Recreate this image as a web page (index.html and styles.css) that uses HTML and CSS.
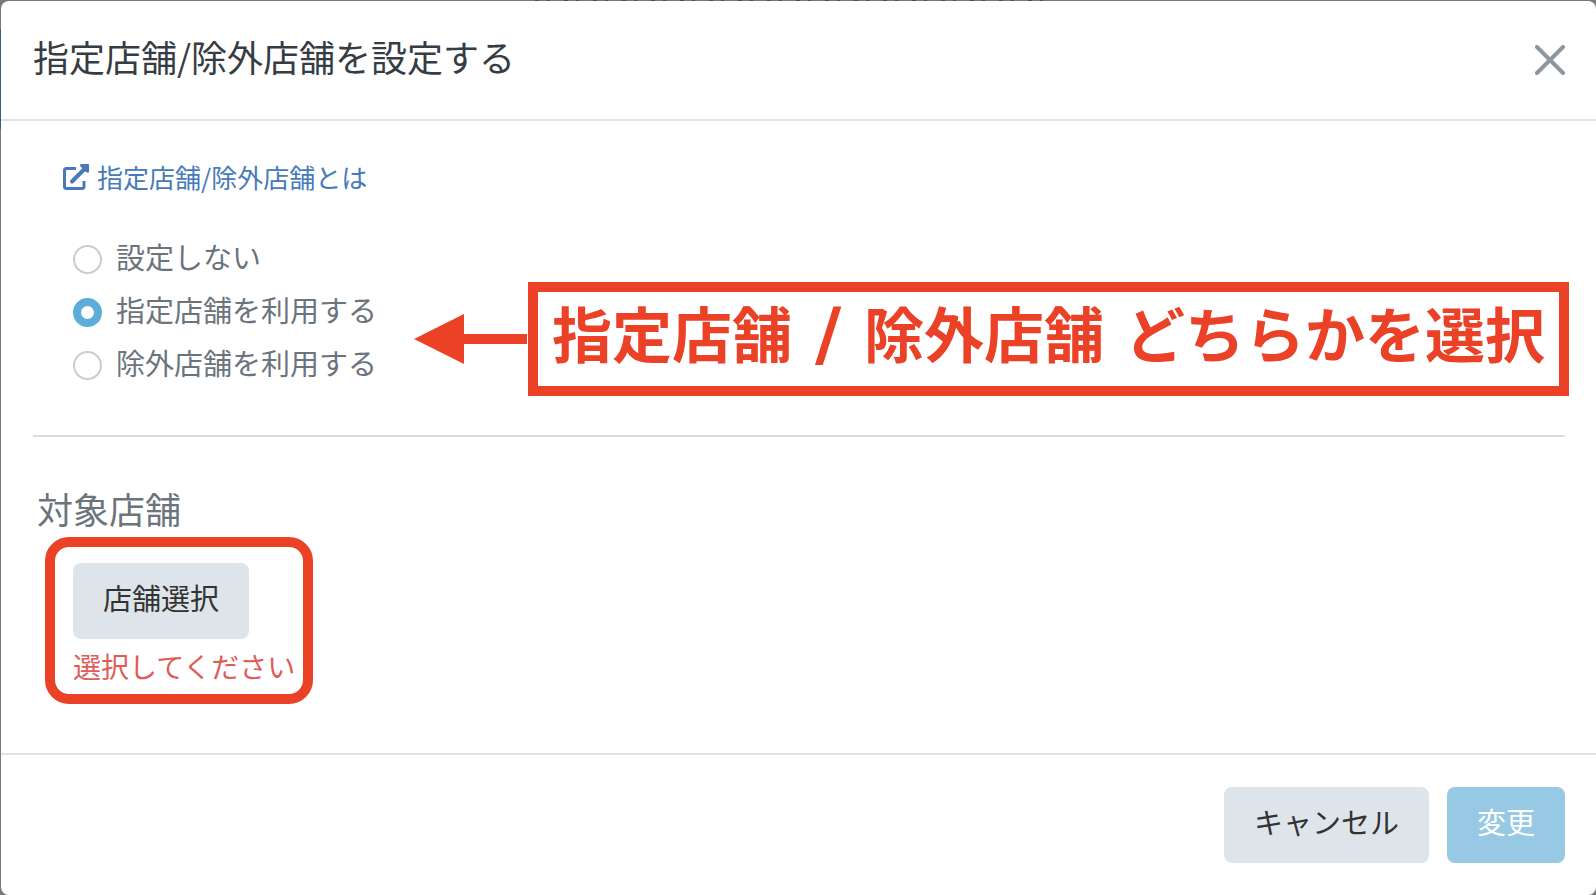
FILE: index.html
```html
<!DOCTYPE html>
<html lang="ja">
<head>
    <meta charset="UTF-8">
    <meta name="viewport" content="width=device-width, initial-scale=1.0">
    <title>指定店舗/除外店舗を設定する</title>
    <link rel="stylesheet" href="styles.css">
</head>
<body>

    <div class="modal" role="dialog" aria-labelledby="modal-title">
        <div class="modal-header">
            <h1 class="modal-title" id="modal-title">指定店舗/除外店舗を設定する</h1>
            <button class="close" type="button" aria-label="閉じる">
                <svg width="30" height="30" viewBox="0 0 30 30"><path d="M2 2L28 28M28 2L2 28"/></svg>
            </button>
        </div>

        <div class="modal-body">
            <a class="help-link" href="#">
                <svg width="26" height="26" viewBox="0 0 26 26">
                    <path class="icon-line" d="M13 4.500H3.500Q1.500 4.500 1.500 6.500V22.500Q1.500 24.500 3.500 24.500H19Q21 24.500 21 22.500V17"/>
                    <path class="icon-line arrow-line" d="M9 17.500L21 5.500"/>
                    <path class="icon-fill" d="M17.500 0H25.200Q26 0 26 .8V8.500L23.500 8.500L17 2Z"/>
                </svg>
                <span>指定店舗/除外店舗とは</span>
            </a>

            <div class="options-row">
                <div class="options">
                    <label class="option"><input type="radio" name="shop"><span>設定しない</span></label>
                    <label class="option"><input type="radio" name="shop" checked><span>指定店舗を利用する</span></label>
                    <label class="option"><input type="radio" name="shop"><span>除外店舗を利用する</span></label>
                </div>
                <div class="note">
                    <svg class="note-arrow" width="114" height="50" viewBox="0 0 114 50"><path d="M0 25L50 0V20H113V30H50V50Z"/></svg>
                    <p class="note-text">指定店舗 <span class="slash">/</span> 除外店舗 どちらかを選択</p>
                </div>
            </div>

            <hr>

            <h2 class="section-title">対象店舗</h2>
            <div class="select-box">
                <button class="btn" type="button">店舗選択</button>
                <p class="error">選択してください</p>
            </div>
        </div>

        <div class="modal-footer">
            <button class="btn" type="button">キャンセル</button>
            <button class="btn btn-primary" type="button">変更</button>
        </div>
    </div>

</body>
</html>
```
FILE: styles.css
```css
* {
    box-sizing: border-box;
}
body {
    margin: 0;
    padding: 1px 0 0 1px;
    min-height: 100vh;
    display: flex;
    font-family: "Noto Sans CJK JP", sans-serif;
    font-size: 29px;
    color: #6b747c;
    background:
        repeating-linear-gradient(90deg, #554b4e 0 4px, #7d7674 4px 12px, #554b4e 12px 15px, #7d7674 15px 29px) 535px 0 / 518px 1px no-repeat,
        linear-gradient(#336384, #336384) 0 29px / 1px 100px no-repeat,
        #7d7878;
}
h1, h2, p {
    margin: 0;
    font-weight: normal;
}
.modal {
    flex: 1;
    display: flex;
    flex-direction: column;
    background: #fff;
    border-radius: 8px;
}
.modal-header {
    display: flex;
    align-items: center;
    justify-content: space-between;
    padding: 32px 31px 32px 32px;
    border-bottom: 2px solid #dde3e8;
}
.modal-title {
    padding-bottom: 8px;
    font-size: 36px;
    line-height: 46px;
    color: #363c43;
}
.close {
    display: flex;
    padding: 0;
    border: none;
    background: none;
    cursor: pointer;
}
.close path {
    fill: none;
    stroke: #8d969f;
    stroke-width: 4;
    stroke-linecap: round;
}
.modal-body {
    flex: 1;
    padding: 38px 31px 48px 32px;
}
.help-link {
    display: flex;
    align-items: center;
    gap: 8px;
    width: fit-content;
    margin-left: 30px;
    font-size: 26px;
    line-height: 36px;
    color: #477ab9;
    text-decoration: none;
}
.icon-line {
    fill: none;
    stroke: #477ab9;
    stroke-width: 3;
}
.arrow-line {
    stroke-width: 4;
    stroke-linecap: round;
}
.icon-fill {
    fill: #477ab9;
}
.options-row {
    display: flex;
    justify-content: space-between;
    margin: 38px -4px 0 40px;
}
.option {
    display: flex;
    align-items: center;
    gap: 14px;
    line-height: 46px;
    padding-bottom: 7px;
}
.option input {
    appearance: none;
    width: 29px;
    height: 29px;
    margin: 7px 0 0;
    border: 2px solid #ccc;
    border-radius: 50%;
    background: #fff;
}
.option input:checked {
    border: 8px solid #5eadd8;
}
.note {
    display: flex;
    align-items: center;
    margin-top: 49px;
    color: #ea4127;
}
.note-arrow {
    fill: #ea4127;
}
.note-text {
    padding: 0 14px 4px;
    border: 10px solid #ea4127;
    font-family: "DejaVu Sans", "Noto Sans CJK JP", sans-serif;
    font-size: 60px;
    font-weight: bold;
    line-height: 90px;
}
.slash {
    margin: 0 2px;
    font-size: 72px;
    line-height: 1;
}
hr {
    height: 2px;
    margin: 39px 0 44px;
    border: none;
    background: #d9dbdc;
}
.section-title {
    margin-left: 4px;
    padding-bottom: 2px;
    font-size: 36px;
    line-height: 54px;
}
.select-box {
    width: fit-content;
    margin-left: 12px;
    padding: 16px 8px 8px 18px;
    border: 10px solid #ea4127;
    border-radius: 24px;
}
.btn {
    display: block;
    height: 76px;
    padding: 0 30px 8px;
    border: none;
    border-radius: 8px;
    font: inherit;
    color: #333;
    background: #dde5ea;
    cursor: pointer;
}
.btn-primary {
    color: #fff;
    background: #97c9e4;
}
.error {
    margin-top: 7px;
    font-size: 28px;
    line-height: 40px;
    color: #dd5e58;
}
.modal-footer {
    display: flex;
    justify-content: flex-end;
    gap: 18px;
    padding: 32px 31px 32px;
    border-top: 2px solid #dde3e8;
}
```
